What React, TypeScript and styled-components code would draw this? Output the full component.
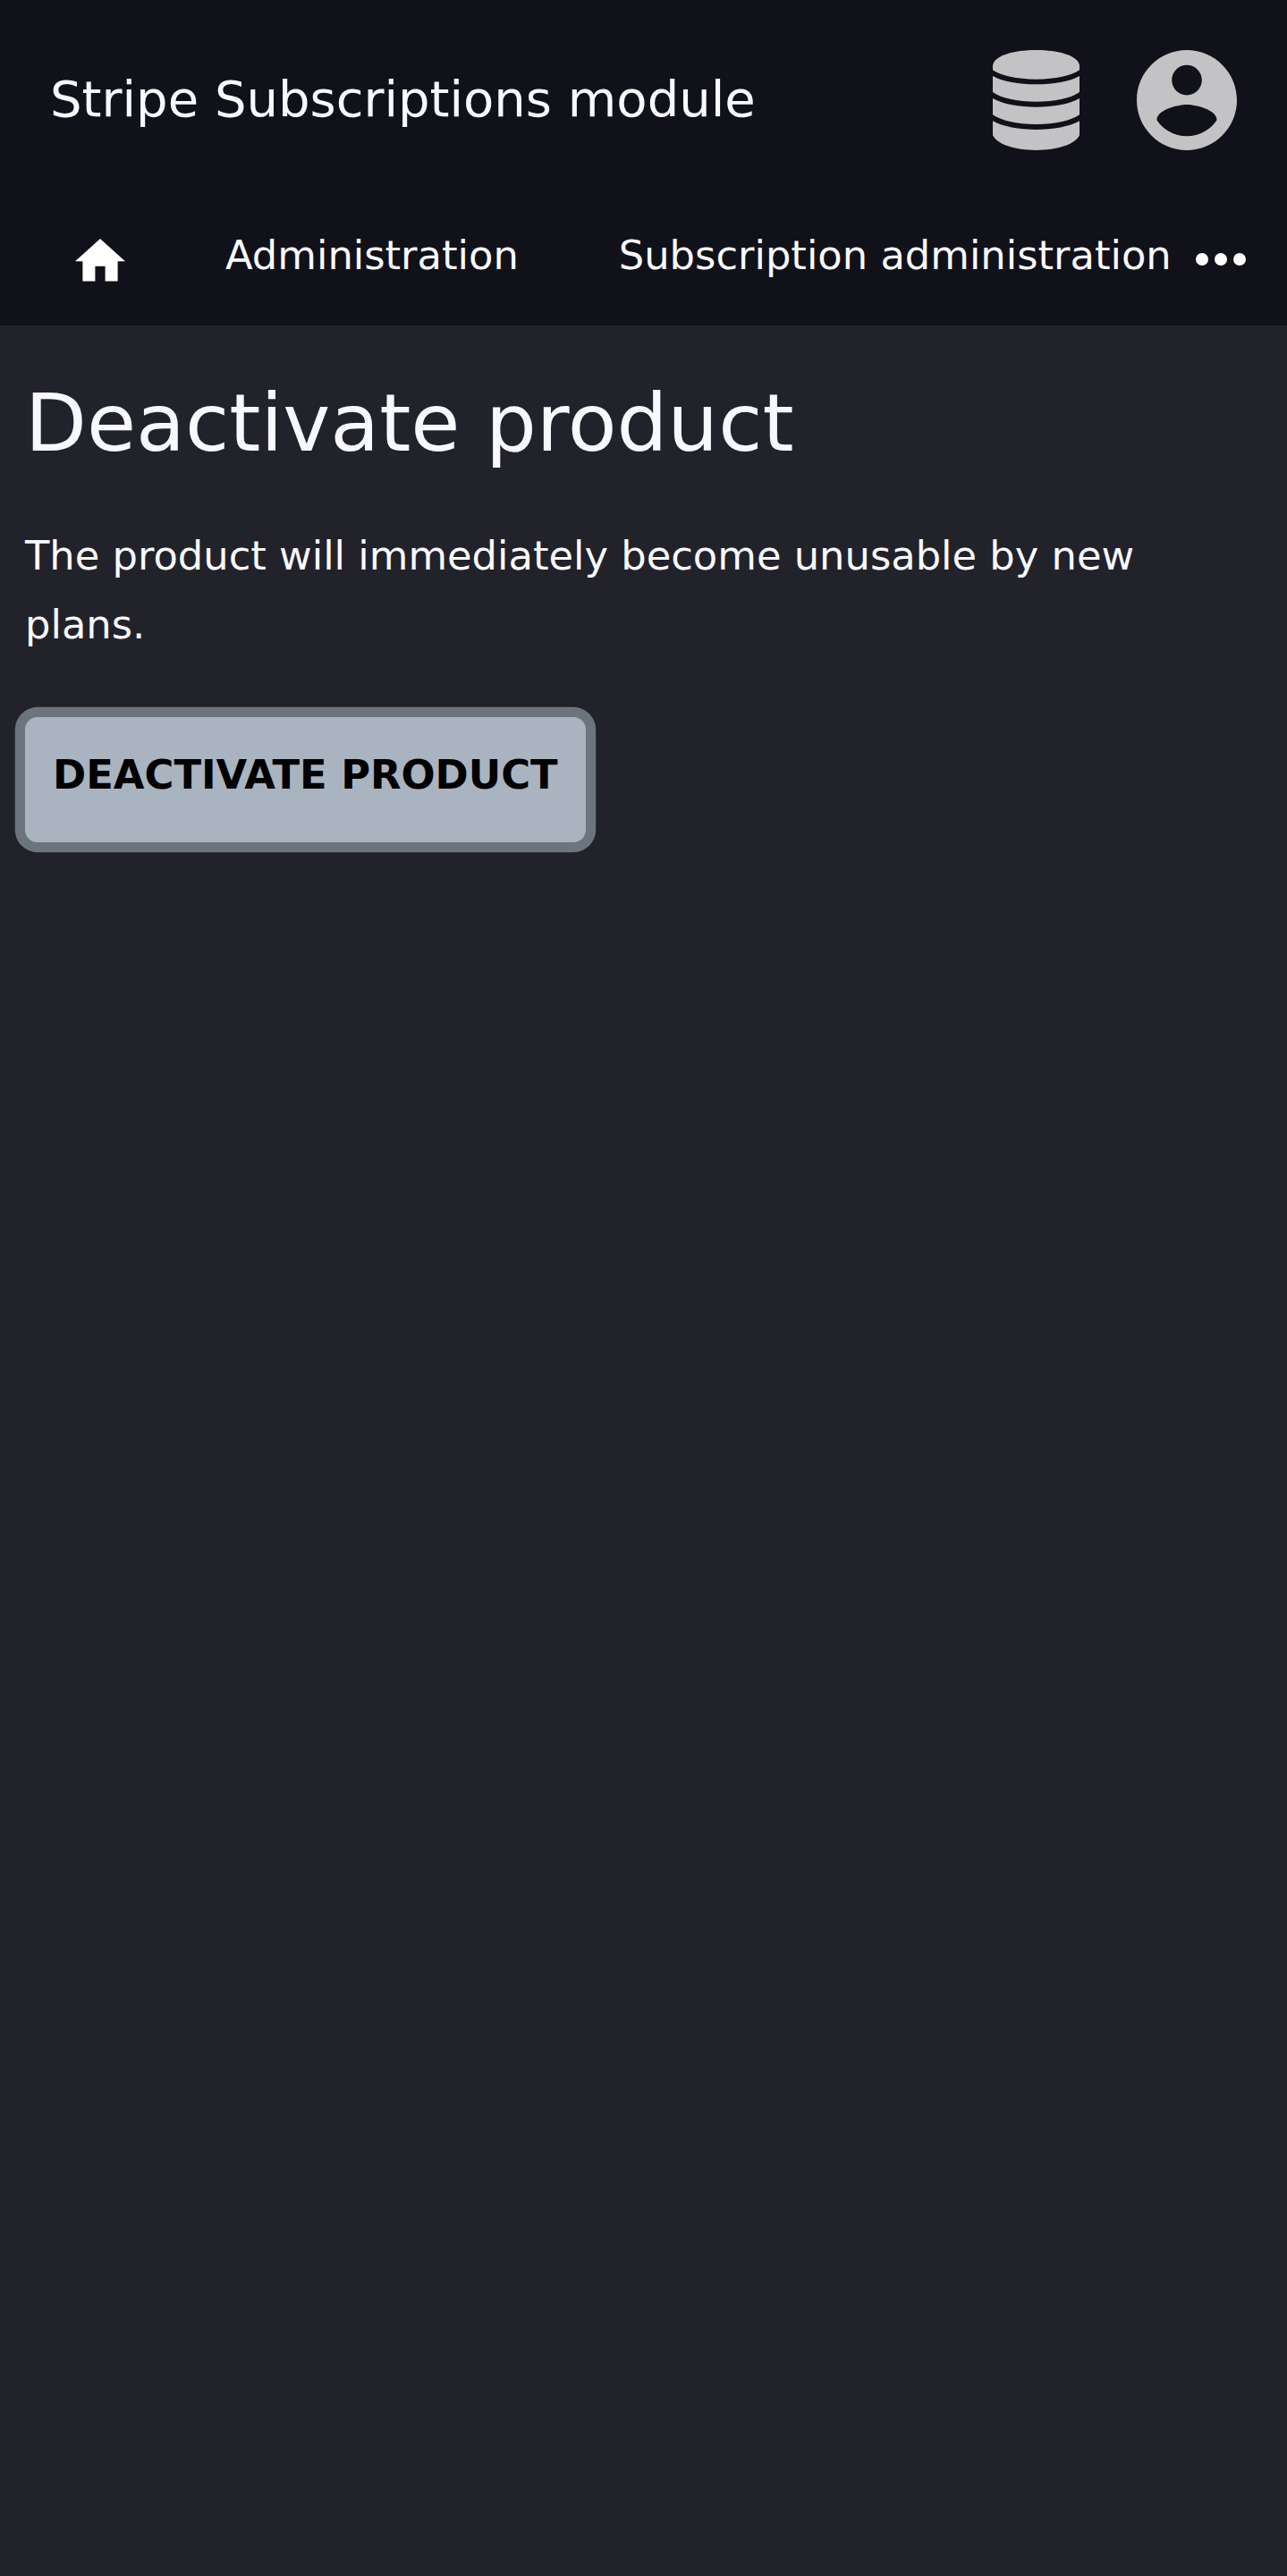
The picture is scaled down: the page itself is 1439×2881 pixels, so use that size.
import React from 'react';
import styled, { createGlobalStyle } from 'styled-components';

const GlobalStyle = createGlobalStyle`
  * { box-sizing: border-box; }
  html { background: #22222a; }
  body {
    margin: 0;
    background: #22222a;
    color: #f8f9fc;
    font-family: "DejaVu Sans", sans-serif;
    font-size: 44.8px;
    line-height: 77px;
  }
`;

const Page = styled.div`
  display: flex;
  flex-direction: column;
  min-height: 2881px;
`;

const Header = styled.header`
  display: flex;
  flex-direction: column;
  height: 364px;
  background: #11111a;
`;

const TopBar = styled.div`
  display: flex;
  align-items: center;
  justify-content: space-between;
  height: 224px;
  padding: 0 56px;
`;

const SiteTitle = styled.div`
  padding-bottom: 3px;
  font-size: 56px;
  line-height: 80px;
  white-space: nowrap;
`;

const Tools = styled.div`
  display: flex;
  align-items: center;
  gap: 64px;
  color: #c3c3c5;
`;

const Icon = styled.svg<{ $w: number; $h: number }>`
  display: block;
  flex: none;
  width: ${(p) => p.$w}px;
  height: ${(p) => p.$h}px;
  fill: currentColor;
`;

const Nav = styled.nav`
  display: flex;
  align-items: flex-start;
  height: 140px;
  padding: 23px 0 0 28px;
  white-space: nowrap;
`;

const NavItem = styled.a`
  padding: 0 56px;
  color: inherit;
`;

const HomeItem = styled(NavItem)`
  padding-top: 20px;
  color: #fff;
`;

const More = styled.button`
  display: flex;
  margin: 36.3px 0 0 -29px;
  padding: 0;
  border: 0;
  background: none;
  color: #fff;
`;

const Main = styled.main`
  display: flex;
  flex-direction: column;
  align-items: flex-start;
  padding: 55px 28px;
`;

const Heading = styled.h1`
  margin: 0 0 56px;
  font-size: 89.6px;
  font-weight: 400;
  line-height: 108px;
`;

const Paragraph = styled.p`
  margin: 0 0 64.6px;
`;

const Submit = styled.button`
  width: 626.7px;
  height: 140px;
  padding: 0 0 10px;
  border: 0;
  border-radius: 14px;
  background: #a9b4c0;
  box-shadow: 0 0 0 11.2px #6c757e;
  color: #000;
  font: 700 44.8px/77px "DejaVu Sans", sans-serif;
  white-space: nowrap;
`;

export default function App() {
  return (
    <Page>
      <GlobalStyle />
      <Header>
        <TopBar>
          <SiteTitle>Stripe Subscriptions module</SiteTitle>
          <Tools>
            <Icon $w={97} $h={112} viewBox="0 0 291 336">
              <path d="M0 51C6 18 70 0 145.500 0S285 18 291 51V67C265 86 210 98 145.500 98S26 86 0 67Z" />
              <path d="M0 87C34 106 88 115 145.500 115S257 106 291 87V141C265 161 210 173 145.500 173S26 161 0 141Z" />
              <path d="M0 162C34 182 88 191 145.500 191S257 182 291 162V217C265 236 210 249 145.500 249S26 236 0 217Z" />
              <path d="M0 238C34 257 88 267 145.500 267S257 257 291 238V286C277 316 218 336 145.500 336S14 316 0 286Z" />
            </Icon>
            <Icon $w={112} $h={112} viewBox="2 2 20 20">
              <path d="M12 2C6.480 2 2 6.480 2 12s4.480 10 10 10 10-4.480 10-10S17.520 2 12 2zm0 3c1.660 0 3 1.340 3 3s-1.340 3-3 3-3-1.340-3-3 1.340-3 3-3zm0 14.200c-2.500 0-4.710-1.280-6-3.220.03-1.990 4-3.080 6-3.080 1.990 0 5.970 1.090 6 3.080-1.290 1.940-3.500 3.220-6 3.220z" />
            </Icon>
          </Tools>
        </TopBar>
        <Nav>
          <HomeItem aria-label="Home">
            <Icon $w={56} $h={47.6} viewBox="2 3 20 17">
              <path d="M10 20v-6h4v6h5v-8h3L12 3 2 12h3v8z" />
            </Icon>
          </HomeItem>
          <NavItem>Administration</NavItem>
          <NavItem>Subscription administration</NavItem>
          <More aria-label="More">
            <Icon $w={56} $h={14} viewBox="0 0 56 14">
              <circle cx="7" cy="7" r="7" />
              <circle cx="28" cy="7" r="7" />
              <circle cx="49" cy="7" r="7" />
            </Icon>
          </More>
        </Nav>
      </Header>
      <Main>
        <Heading>Deactivate product</Heading>
        <Paragraph>The product will immediately become unusable by new plans.</Paragraph>
        <Submit>DEACTIVATE PRODUCT</Submit>
      </Main>
    </Page>
  );
}
